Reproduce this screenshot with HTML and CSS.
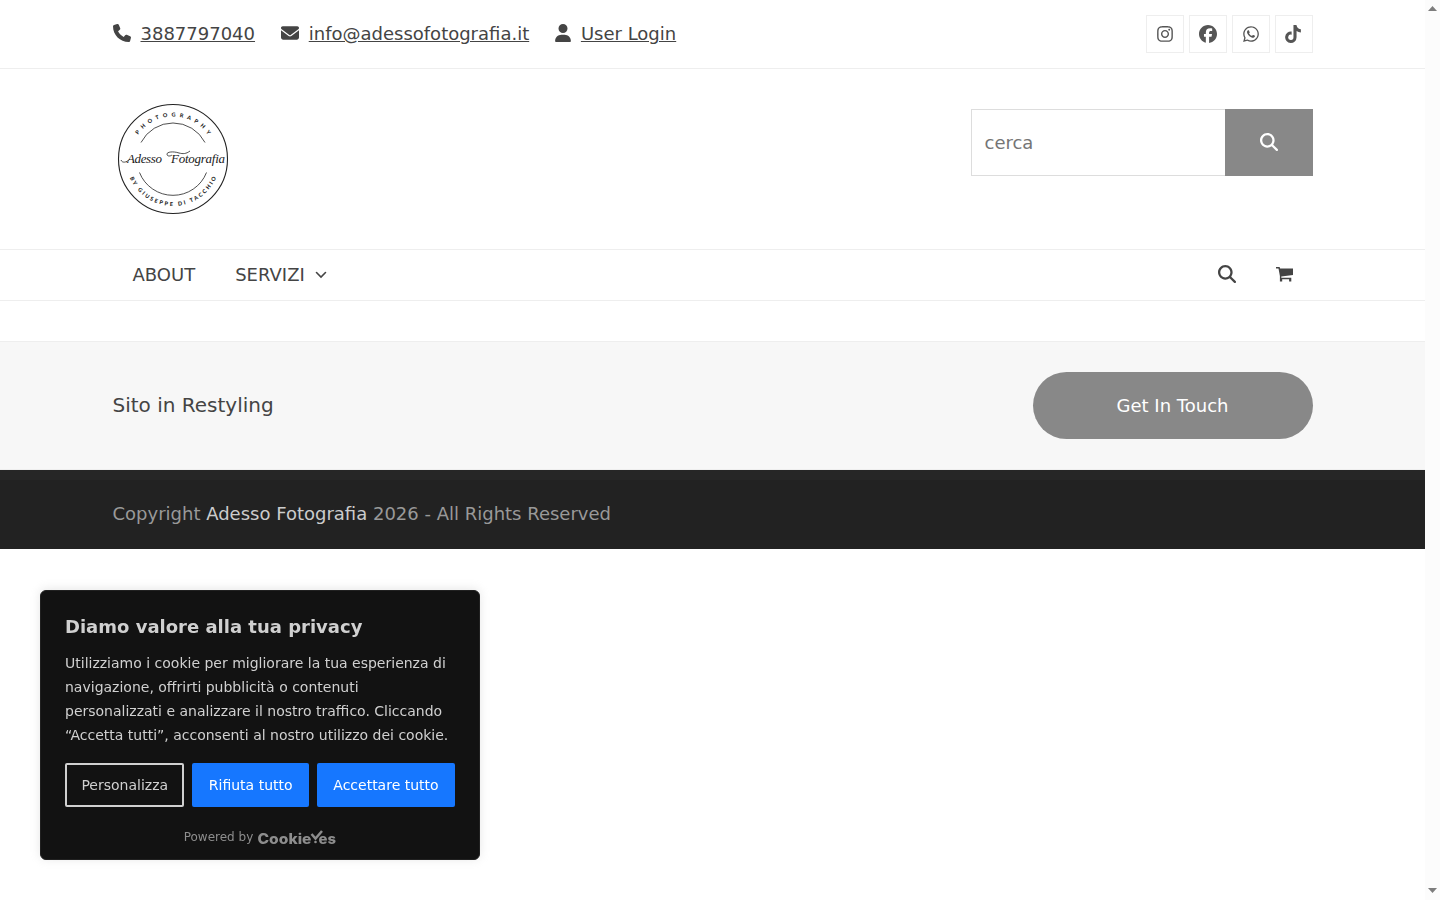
FILE: index.html
```html
<!DOCTYPE html>
<html lang="it">
<head>
  <meta charset="UTF-8">
  <meta name="viewport" content="width=device-width, initial-scale=1.0">
  <title>Adesso Fotografia</title>
  <link rel="stylesheet" href="styles.css">
</head>
<body>
  <div class="page">
    <div class="top-bar">
      <div class="container">
        <ul class="contacts">
          <li>
            <svg class="icon" width="18" height="18" viewBox="0 0 512 512"><path d="M164.9 24.6c-7.700-18.600-28-28.500-47.400-23.200l-88 24C12.100 30.200 0 46 0 64C0 311.400 200.600 512 448 512c18 0 33.800-12.100 38.600-29.500l24-88c5.300-19.400-4.600-39.700-23.200-47.400l-96-40c-16.300-6.800-35.200-2.100-46.300 11.600L304.700 368C234.300 334.700 177.300 277.700 144 207.300L193.300 167c13.700-11.200 18.400-30 11.600-46.300l-40-96z"/></svg>
            <a href="#">3887797040</a>
          </li>
          <li>
            <svg class="icon" width="18" height="18" viewBox="0 0 512 512"><path d="M48 64C21.500 64 0 85.500 0 112c0 15.100 7.100 29.300 19.200 38.400L236.800 313.600c11.400 8.500 27 8.500 38.400 0L492.800 150.400c12.100-9.100 19.200-23.300 19.200-38.400c0-26.500-21.500-48-48-48H48zM0 176V384c0 35.300 28.700 64 64 64H448c35.300 0 64-28.700 64-64V176L294.400 339.200c-22.800 17.100-54 17.100-76.800 0L0 176z"/></svg>
            <a href="#">info@adessofotografia.it</a>
          </li>
          <li>
            <svg class="icon" width="16" height="18" viewBox="0 0 448 512"><path d="M224 256A128 128 0 1 0 224 0a128 128 0 1 0 0 256zm-45.700 48C79.800 304 0 383.800 0 482.300C0 498.700 13.300 512 29.700 512H418.300c16.400 0 29.700-13.300 29.700-29.700C448 383.800 368.200 304 269.700 304H178.300z"/></svg>
            <a href="#">User Login</a>
          </li>
        </ul>
        <div class="socials">
          <a href="#" aria-label="Instagram"><svg width="16" height="18" viewBox="0 0 448 512"><path d="M224.100 141c-63.600 0-114.900 51.300-114.900 114.900s51.300 114.900 114.900 114.900S339 319.500 339 255.900 287.700 141 224.100 141zm0 189.600c-41.100 0-74.700-33.500-74.700-74.700s33.500-74.700 74.700-74.700 74.700 33.500 74.700 74.700-33.600 74.700-74.700 74.700zm146.400-194.300c0 14.900-12 26.800-26.800 26.800-14.900 0-26.800-12-26.800-26.800s12-26.800 26.800-26.800 26.800 12 26.800 26.800zm76.100 27.200c-1.700-35.900-9.900-67.700-36.200-93.900-26.200-26.200-58-34.400-93.900-36.200-37-2.100-147.900-2.100-184.900 0-35.800 1.700-67.600 9.900-93.900 36.100s-34.400 58-36.200 93.900c-2.100 37-2.100 147.900 0 184.900 1.700 35.900 9.900 67.700 36.200 93.900s58 34.400 93.900 36.200c37 2.100 147.900 2.100 184.900 0 35.900-1.700 67.700-9.900 93.900-36.200 26.200-26.200 34.400-58 36.200-93.900 2.100-37 2.100-147.800 0-184.800zM398.800 388c-7.800 19.600-22.900 34.700-42.600 42.600-29.500 11.700-99.500 9-132.100 9s-102.700 2.600-132.100-9c-19.600-7.800-34.700-22.900-42.600-42.600-11.700-29.500-9-99.500-9-132.100s-2.600-102.700 9-132.100c7.800-19.600 22.900-34.700 42.600-42.600 29.500-11.700 99.500-9 132.100-9s102.700-2.600 132.100 9c19.600 7.800 34.700 22.900 42.600 42.600 11.700 29.500 9 99.500 9 132.100s2.700 102.700-9 132.100z"/></svg></a>
          <a href="#" aria-label="Facebook"><svg width="18" height="18" viewBox="0 0 512 512"><path d="M512 256C512 114.600 397.400 0 256 0S0 114.600 0 256C0 376 82.700 476.800 194.200 504.500V334.200H141.400V256h52.800V222.300c0-87.100 39.400-127.500 125-127.500c16.200 0 44.200 3.200 55.700 6.400V172c-6-.6-16.500-1-29.600-1c-42 0-58.200 15.900-58.200 57.200V256h83.600l-14.400 78.200H287V510.100C413.800 494.800 512 386.900 512 256z"/></svg></a>
          <a href="#" aria-label="WhatsApp"><svg width="16" height="18" viewBox="0 0 448 512"><path d="M380.900 97.100C339 55.100 283.200 32 223.900 32c-122.400 0-222 99.600-222 222 0 39.100 10.200 77.300 29.600 111L0 480l117.700-30.900c32.400 17.700 68.900 27 106.100 27h.1c122.300 0 224.100-99.600 224.100-222 0-59.300-25.200-115-67.100-157zm-157 341.600c-33.200 0-65.700-8.900-94-25.700l-6.700-4-69.800 18.300L72 359.200l-4.400-7c-18.500-29.400-28.200-63.300-28.200-98.200 0-101.700 82.800-184.500 184.600-184.500 49.300 0 95.600 19.200 130.400 54.100 34.800 34.900 56.200 81.200 56.100 130.500 0 101.800-84.900 184.600-186.600 184.600zm101.200-138.200c-5.500-2.800-32.800-16.200-37.900-18-5.100-1.900-8.800-2.800-12.500 2.800-3.700 5.600-14.300 18-17.600 21.800-3.200 3.700-6.500 4.200-12 1.400-32.600-16.300-54-29.100-75.500-66-5.700-9.800 5.700-9.100 16.300-30.300 1.800-3.700.9-6.900-.5-9.700-1.400-2.800-12.500-30.100-17.100-41.200-4.500-10.800-9.100-9.300-12.500-9.500-3.200-.2-6.900-.2-10.600-.2-3.700 0-9.700 1.400-14.800 6.900-5.100 5.600-19.400 19-19.400 46.300 0 27.300 19.900 53.700 22.600 57.400 2.800 3.700 39.100 59.700 94.800 83.800 35.200 15.200 49 16.500 66.600 13.900 10.700-1.600 32.800-13.400 37.400-26.400 4.600-13 4.600-24.100 3.200-26.400-1.300-2.500-5-3.900-10.500-6.600z"/></svg></a>
          <a href="#" aria-label="TikTok"><svg width="16" height="18" viewBox="0 0 448 512"><path d="M448 209.900a210.100 210.100 0 0 1-122.800-39.300V349.400A162.600 162.600 0 1 1 185 188.300V278.200a74.600 74.600 0 1 0 52.200 71.200V0l88 0a121.200 121.200 0 0 0 1.900 22.200h0A122.200 122.200 0 0 0 381 102.400a121.400 121.400 0 0 0 67 20.100z"/></svg></a>
        </div>
      </div>
    </div>

    <header class="header">
      <div class="container">
        <a href="#" class="logo">
          <svg width="120" height="120" viewBox="0 0 120 120">
            <defs>
              <path id="arc-top" d="M17.500 60a42.500 42.500 0 0 1 85 0"/>
              <path id="arc-bottom" d="M13 60a47 47 0 0 0 94 0"/>
            </defs>
            <g class="logo-rings">
              <circle cx="60" cy="60" r="54.500"/>
              <path d="M28 43.500a36 36 0 0 1 64 0M26.500 73.500a36 36 0 0 0 67 0"/>
            </g>
            <text class="logo-ring-text"><textPath href="#arc-top" startOffset="50%" text-anchor="middle" textLength="82">PHOTOGRAPHY</textPath></text>
            <text class="logo-ring-text"><textPath href="#arc-bottom" startOffset="50%" text-anchor="middle" textLength="109">BY GIUSEPPE DI TACCHIO</textPath></text>
            <text class="logo-name" x="14" y="63.500" textLength="35">Adesso</text>
            <text class="logo-name" x="58" y="63.500" textLength="54">Fotografia</text>
            <path class="logo-swash" d="M8 61c1 3 5 3 9-1M66 54c-6-2-12-1-12 1 0 3 4 2 5 1M66 54c4 1 7 1 11-2"/>
          </svg>
        </a>
        <form class="search">
          <input type="text" placeholder="cerca">
          <button type="button" aria-label="Cerca"><svg width="18" height="18" viewBox="0 0 512 512"><path d="M416 208c0 45.900-14.900 88.300-40 122.700L502.600 457.400c12.500 12.500 12.500 32.800 0 45.300s-32.800 12.500-45.300 0L330.700 376c-34.400 25.200-76.800 40-122.700 40C93.100 416 0 322.900 0 208S93.100 0 208 0S416 93.100 416 208zM208 352a144 144 0 1 0 0-288 144 144 0 1 0 0 288z"/></svg></button>
        </form>
      </div>
    </header>

    <nav class="nav">
      <div class="container">
        <div class="menu">
          <a href="#">ABOUT</a>
          <a href="#">SERVIZI <svg class="chevron" width="12" height="8" viewBox="0 0 12 8"><path d="M1.500 1.500 6 6l4.500-4.500"/></svg></a>
        </div>
        <div class="menu menu-icons">
          <a href="#" aria-label="Cerca"><svg width="18" height="18" viewBox="0 0 512 512"><path d="M416 208c0 45.900-14.900 88.300-40 122.700L502.600 457.400c12.500 12.500 12.500 32.800 0 45.300s-32.800 12.500-45.300 0L330.700 376c-34.400 25.200-76.800 40-122.700 40C93.100 416 0 322.900 0 208S93.100 0 208 0S416 93.100 416 208zM208 352a144 144 0 1 0 0-288 144 144 0 1 0 0 288z"/></svg></a>
          <a href="#" aria-label="Carrello"><svg width="17" height="15" viewBox="0 0 17 15"><path d="M0 0h3.600l.5 1.500H17V8L5.300 9.400v1.300h10v3.800h-2.200v-2.200H6.200v2.200H3.900V9L2.500 1.500H0z"/></svg></a>
        </div>
      </div>
    </nav>

    <main class="content"></main>

    <section class="callout">
      <div class="container">
        <div class="callout-text">Sito in Restyling</div>
        <a href="#" class="callout-button">Get In Touch</a>
      </div>
    </section>

    <footer class="footer">
      <div class="container">
        <p>Copyright <a href="#">Adesso Fotografia</a> 2026 - All Rights Reserved</p>
      </div>
    </footer>
  </div>

  <div class="scrollbar">
    <svg width="9" height="5" viewBox="0 0 9 5"><path d="M0 5 4.500 0 9 5z"/></svg>
    <svg width="9" height="5" viewBox="0 0 9 5"><path d="M0 0h9L4.500 5z"/></svg>
  </div>

  <div class="cookie">
    <h2>Diamo valore alla tua privacy</h2>
    <p>Utilizziamo i cookie per migliorare la tua esperienza di navigazione, offrirti pubblicità o contenuti personalizzati e analizzare il nostro traffico. Cliccando “Accetta tutti”, acconsenti al nostro utilizzo dei cookie.</p>
    <div class="cookie-buttons">
      <button type="button" class="outline">Personalizza</button>
      <button type="button">Rifiuta tutto</button>
      <button type="button">Accettare tutto</button>
    </div>
    <div class="powered">
      Powered by
      <svg width="79" height="16" viewBox="0 0 79 16">
        <text x="0.500" y="14.500" textLength="54" lengthAdjust="spacingAndGlyphs">Cookie</text>
        <text x="61.500" y="14.500" textLength="17.500" lengthAdjust="spacingAndGlyphs">es</text>
        <path d="M54.500 5 58.500 9.500 65 2"/>
        <circle cx="58.500" cy="13" r="1.300"/>
      </svg>
    </div>
  </div>
</body>
</html>
```

FILE: styles.css
```css
* {
  box-sizing: border-box;
}

body {
  display: flex;
  height: 100vh;
  margin: 0;
  overflow: hidden;
  background: #fff;
  color: #444;
  font-family: "DejaVu Sans", sans-serif;
  font-size: 18px;
  line-height: 30px;
}

a {
  color: inherit;
  text-decoration: none;
}

svg {
  display: block;
  flex: none;
  fill: currentColor;
}

.page {
  flex: 1;
}

.container {
  display: flex;
  justify-content: space-between;
  align-items: center;
  width: 1200px;
  margin: 0 auto;
}

/* Top bar */
.top-bar {
  padding: 15px 0;
  border-bottom: 1px solid #eee;
}

.contacts {
  display: flex;
  gap: 25.7px;
  margin: 0;
  padding: 0;
  list-style: none;
}

.contacts li {
  display: flex;
  align-items: center;
  gap: 10px;
}

.contacts .icon {
  margin-bottom: 2px;
}

.contacts a {
  text-decoration: underline;
}

.socials {
  display: flex;
  gap: 5px;
  color: #555;
}

.socials a {
  display: flex;
  align-items: center;
  justify-content: center;
  width: 38px;
  height: 38px;
  border: 1px solid #eee;
}

.socials a:last-child {
  padding-right: 1px;
}

/* Header */
.header {
  padding: 30px 0;
  border-bottom: 1px solid #eee;
}

.header .container {
  align-items: flex-start;
}

.logo {
  color: #222;
}

.logo-rings {
  fill: none;
  stroke: #222;
  stroke-width: .8;
}

.logo-rings circle {
  stroke-width: 1.1;
}

.logo-ring-text {
  font-family: Lato, sans-serif;
  font-size: 5.5px;
  font-weight: 900;
}

.logo-name {
  font-family: "Liberation Serif", serif;
  font-size: 13px;
  font-style: italic;
}

.logo-swash {
  fill: none;
  stroke: #222;
  stroke-width: .8;
}

.search {
  display: flex;
  width: 342px;
  height: 67px;
  margin-top: 10px;
}

.search input {
  flex: 1;
  min-width: 0;
  padding: 0 13px;
  border: 1px solid #ddd;
  border-right: 0;
  font: inherit;
}

.search input::placeholder {
  color: #757575;
}

.search button {
  display: flex;
  align-items: center;
  justify-content: center;
  width: 88px;
  padding: 0 0 2px;
  border: 0;
  background: #888;
  color: #fff;
}

/* Navigation */
.nav {
  border-bottom: 1px solid #eee;
}

.menu {
  display: flex;
}

.menu a {
  display: flex;
  align-items: center;
  height: 50px;
  padding: 0 20px;
}

.menu-icons a {
  padding-bottom: 2px;
}

.chevron {
  margin-left: 10px;
  fill: none;
  stroke: currentColor;
  stroke-width: 1.6;
  stroke-linecap: round;
}

.content {
  height: 40px;
}

/* Callout */
.callout {
  padding: 30px 0;
  border: solid #eee;
  border-width: 1px 0;
  background: #f7f7f7;
}

.callout-text {
  padding-bottom: 2px;
  font-size: 20px;
}

.callout-button {
  width: 280px;
  border-radius: 67px;
  background: #888;
  color: #fff;
  line-height: 67px;
  text-align: center;
}

/* Footer */
.footer {
  height: 79px;
  padding-top: 19px;
  border-top: 10px solid #262626;
  background: #222;
  color: #999;
}

.footer p {
  margin: 0;
}

.footer a {
  color: #ccc;
}

.scrollbar {
  display: flex;
  flex-direction: column;
  align-items: center;
  justify-content: space-between;
  width: 15px;
  padding: 6px 0 7px;
  background: #fcfcfc;
  color: #7d7d7d;
}

/* Cookie banner */
.cookie {
  position: fixed;
  left: 40px;
  bottom: 40px;
  width: 440px;
  height: 270px;
  padding: 20px 24px;
  border: 1px solid #212121;
  border-radius: 6px;
  background: #121212;
  box-shadow: 0 -1px 10px rgba(172, 171, 171, .3);
  color: #d0d0d0;
  font-size: 14px;
  line-height: 24px;
}

.cookie h2 {
  margin: 4px 0 12px;
  font-size: 18px;
  line-height: 24px;
}

.cookie p {
  margin: 0 -4px 16px 0;
}

.cookie-buttons {
  display: flex;
  gap: 8px;
}

.cookie button {
  flex: 1 1 auto;
  height: 44px;
  padding: 0;
  border: 2px solid #1677ff;
  border-radius: 2px;
  background: #1677ff;
  color: #fff;
  font: inherit;
}

.cookie .outline {
  border-color: #d0d0d0;
  background: none;
  color: #d0d0d0;
}

.powered {
  display: flex;
  align-items: center;
  justify-content: center;
  gap: 4px;
  margin-top: 18px;
  color: #8d8d8d;
  font-size: 12px;
}

.powered text {
  font-family: Inter, sans-serif;
  font-size: 14.5px;
  font-weight: 800;
}

.powered path {
  fill: none;
  stroke: currentColor;
  stroke-width: 2.5;
}
```
